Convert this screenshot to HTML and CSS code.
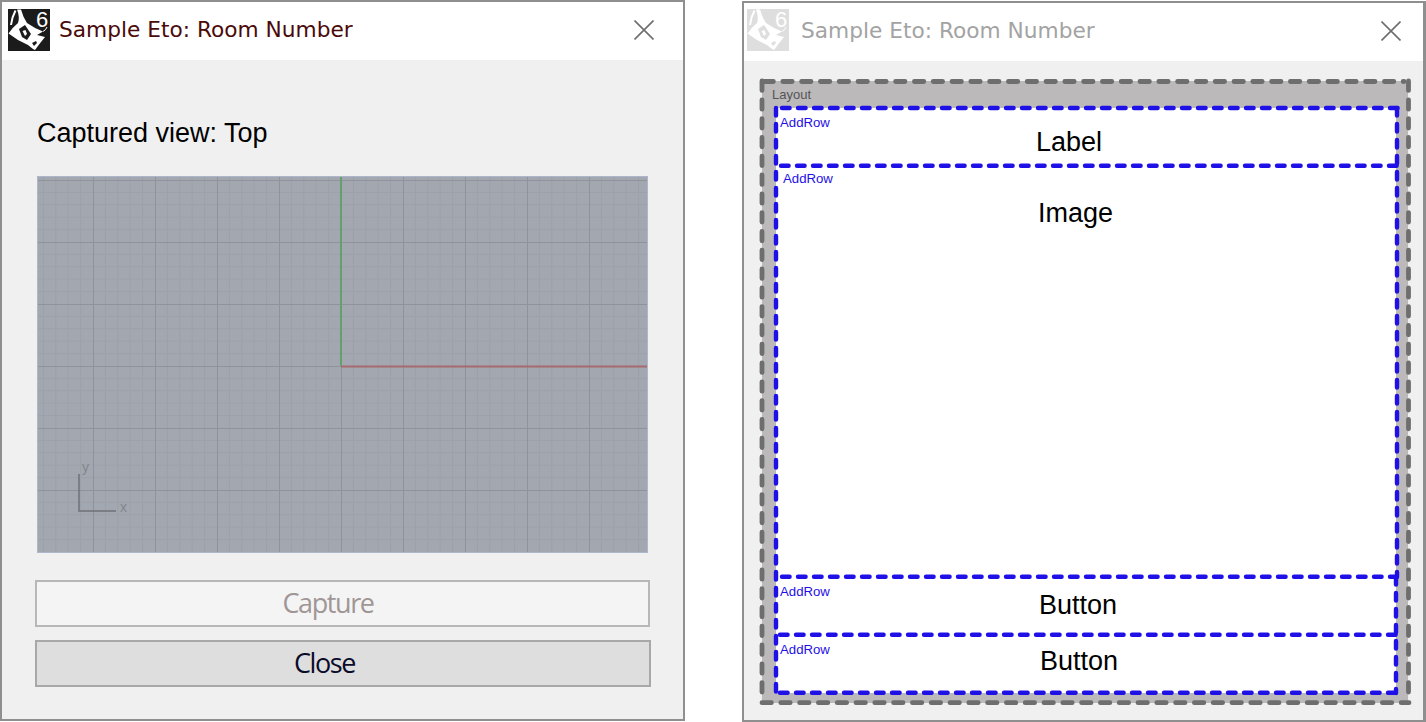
FILE: index.html
```html
<!DOCTYPE html>
<html>
<head>
  <meta charset="UTF-8">
  <title>Sample Eto: Room Number</title>
  <link rel="stylesheet" href="styles.css">
</head>
<body>
  <svg class="defs" width="0" height="0">
    <symbol id="rhino" viewBox="0 0 42 42">
      <rect width="42" height="42" fill="currentColor"/>
      <path fill="#fff" d="M9 0.5 L13 0.5 Q15 8 19 14 Q26 19 35 22.5 L29 26 L37 28 Q32 34 27 41 L25 40 L20 36 L10 31 L0.5 24.5 Q5 18 10 14 Q12 8 9 0.5 Z"/>
      <path fill="none" stroke="#fff" stroke-width="2" d="M7.5 1.5 Q4 8 3 16"/>
      <path fill="currentColor" d="M11 20 L17 16 L23 25 L19 31 L14 28 Z"/>
      <path fill="#fff" d="M14.5 22 L17.5 21 L19 25 L17 27 Z"/>
      <path fill="currentColor" d="M24 34 L28 32 L29 34 L26 37 Z"/>
      <path fill="none" stroke="#fff" stroke-width="1" d="M35 22.5 Q38 21 39 18"/>
    </symbol>
    <pattern id="grid" width="62" height="62" x="-6" y="4" patternUnits="userSpaceOnUse">
      <path d="M12.4 0V62M24.8 0V62M37.2 0V62M49.6 0V62M0 12.4H62M0 24.8H62M0 37.2H62M0 49.6H62" stroke="#9ca1aa" stroke-width="1" fill="none"/>
      <path d="M0.5 0V62M0 0.5H62" stroke="#8f939b" stroke-width="1" fill="none"/>
    </pattern>
  </svg>

  <div class="desktop">
    <section class="win win-main">
      <header class="titlebar">
        <div class="logo">
          <svg class="logo-art"><use href="#rhino"/></svg>
          <span class="logo-six">6</span>
        </div>
        <span class="title">Sample Eto: Room Number</span>
        <svg class="close-x" viewBox="0 0 20 20"><path d="M0.5 0.5L19.5 19.5M19.5 0.5L0.5 19.5"/></svg>
      </header>
      <div class="content">
        <h2 class="captured">Captured view: Top</h2>
        <svg class="viewport" viewBox="0 0 611 377">
          <rect width="611" height="377" fill="#a2a7b0"/>
          <rect width="611" height="377" fill="url(#grid)"/>
          <path d="M304 0V190" stroke="#64a06c" stroke-width="2"/>
          <path d="M304 190.5H611" stroke="#a86a6e" stroke-width="2"/>
          <path d="M42 298V335H79" fill="none" stroke="#6f7277" stroke-width="1.5"/>
          <text class="axis" x="45" y="296">y</text>
          <text class="axis" x="83" y="336">x</text>
        </svg>
        <button class="btn btn-capture">Capture</button>
        <button class="btn btn-close">Close</button>
      </div>
    </section>

    <section class="win win-faded">
      <header class="titlebar">
        <div class="logo">
          <svg class="logo-art"><use href="#rhino"/></svg>
          <span class="logo-six">6</span>
        </div>
        <span class="title">Sample Eto: Room Number</span>
        <svg class="close-x" viewBox="0 0 20 20"><path d="M0.5 0.5L19.5 19.5M19.5 0.5L0.5 19.5"/></svg>
      </header>
      <div class="content-faded">
        <div class="layout-box">
          <div class="layout-tag">Layout</div>
          <div class="rows">
            <div class="row row-label">
              <span class="addrow">AddRow</span>
              <span class="row-text">Label</span>
            </div>
            <div class="row row-image">
              <span class="addrow">AddRow</span>
              <span class="row-text">Image</span>
            </div>
            <div class="row row-btn">
              <span class="addrow">AddRow</span>
              <span class="row-text">Button</span>
            </div>
            <div class="row row-btn row-btn-last">
              <span class="addrow">AddRow</span>
              <span class="row-text">Button</span>
            </div>
          </div>
          <!-- dashed outlines, drawn over the boxes. coords start 2px outside layout-box -->
          <svg class="dashes" viewBox="0 0 650 626">
            <g class="dash-gray">
              <path d="M4 2.5H644"/>
              <path d="M2 2V622"/>
              <path d="M648.5 2V622"/>
              <path d="M2 623.7H649"/>
            </g>
            <g class="dash-blue">
              <path d="M22 29H638"/>
              <path d="M21 86.7H638"/>
              <path d="M22 497.7H636"/>
              <path d="M20 555.7H636"/>
              <path d="M20 613.7H636"/>
              <path d="M16 29V614"/>
              <path d="M637 29V498"/>
              <path d="M636 498V614"/>
            </g>
          </svg>
        </div>
      </div>
    </section>
  </div>
</body>
</html>
```

FILE: styles.css
```css
body {
  margin: 0;
  background-color: #fff;
  font-family: "Liberation Sans", Arial, sans-serif;
  overflow: hidden;
}

.defs {
  display: block;
  height: 0;
}

.desktop {
  display: flex;
  justify-content: space-between;
  align-items: flex-start;
  height: 722px;
}

.win {
  box-sizing: border-box;
  display: flex;
  flex-direction: column;
  background-color: #f0f0f0;
  border: 2px solid #8f8f8f;
}

.win-main {
  width: 685px;
  height: 721px;
  color: #1b1b1b;
}

.win-faded {
  width: 684px;
  height: 721px;
  margin-top: 1px;
  border-width: 2px 3px 2px 2px;
}

/* title bar */
.titlebar {
  box-sizing: border-box;
  display: flex;
  align-items: center;
  flex: 0 0 58px;
  background-color: #fff;
  padding: 0 0 2px 6px;
}

.logo {
  position: relative;
  width: 42px;
  height: 42px;
  color: #1b1b1b;
}

.logo-art {
  display: block;
  width: 42px;
  height: 42px;
}

.logo-six {
  position: absolute;
  left: 28px;
  top: 0;
  font-size: 22px;
  line-height: 22px;
  color: #fff;
}

.title {
  margin: 0 0 2px 9px;
  font-family: "DejaVu Sans", Verdana, sans-serif;
  font-size: 21.7px;
  color: #4b0a0a;
}

.close-x {
  width: 20px;
  height: 20px;
  margin-left: auto;
  margin-right: 29px;
}

.close-x path {
  stroke: #6e6e6e;
  stroke-width: 1.6;
  fill: none;
}

.win-faded .titlebar {
  padding-left: 3px;
}

.win-faded .logo {
  margin-bottom: 2px;
  color: #dedede;
}

.win-faded .title {
  margin-left: 12px;
  color: #a3a3a3;
}

.win-faded .close-x {
  margin-right: 22px;
}

/* left window */
.content {
  display: flex;
  flex-direction: column;
  align-items: flex-start;
  padding: 58px 0 0 33px;
}

.captured {
  margin: 0 0 28px 2px;
  font-size: 27px;
  font-weight: normal;
  line-height: 30px;
  color: #000;
}

.viewport {
  display: block;
  width: 611px;
  height: 377px;
  margin-left: 2px;
  outline: 1px solid #adb6ca;
  outline-offset: -1px;
}

.axis {
  font-family: "Liberation Sans", sans-serif;
  font-size: 14px;
  fill: #83878d;
}

.btn {
  box-sizing: border-box;
  height: 47px;
  font-family: "Open Sans", sans-serif;
  font-size: 27px;
  letter-spacing: -1.4px;
}

.btn-capture {
  width: 615px;
  margin-top: 27px;
  padding: 0 29px 2px 0;
  background-color: #f4f4f4;
  border: 2px solid #b5b7b9;
  color: #a09696;
}

.btn-close {
  width: 616px;
  margin-top: 13px;
  padding: 0 37px 2px 0;
  background-color: #dedede;
  border: 2px solid #a8a8a8;
  color: #0b0b2a;
}

/* right window */
.content-faded {
  padding: 20px 0 0 18px;
}

.layout-box {
  position: relative;
  width: 646px;
  height: 622px;
  background-color: #bbb9ba;
}

.layout-tag {
  padding: 6px 0 0 10px;
  font-size: 13px;
  line-height: 15px;
  color: #555;
}

.rows {
  display: flex;
  flex-direction: column;
  margin: 6px 0 0 14px;
  width: 620px;
  background-color: #fff;
}

.row {
  box-sizing: border-box;
  display: flex;
  flex-direction: column;
  color: #000;
}

.addrow {
  font-size: 13.2px;
  line-height: 15px;
  color: #1f10e8;
}

.row-text {
  font-size: 27px;
  line-height: 32px;
}

.row-label {
  height: 58px;
  padding: 7px 0 0 4px;
}

.row-label .row-text {
  margin: -4px 0 0 256px;
}

.row-image {
  height: 411px;
  padding: 5px 0 0 7px;
}

.row-image .row-text {
  margin: 11px 0 0 255px;
}

.row-btn {
  height: 58px;
  padding: 7px 0 0 4px;
}

.row-btn .row-text {
  margin: -10px 0 0 259px;
}

.row-btn-last .row-text {
  margin: -12px 0 0 260px;
}

.dashes {
  position: absolute;
  left: -2px;
  top: -2px;
  width: 650px;
  height: 626px;
  overflow: visible;
}

.dashes path {
  fill: none;
  stroke-linecap: round;
}

.dash-gray path {
  stroke: #6e6e6e;
  stroke-width: 4.8;
  stroke-dasharray: 9.4 9.4;
}

.dash-blue path {
  stroke: #1f10e8;
  stroke-width: 4.4;
  stroke-dasharray: 7.6 8.4;
}
```
